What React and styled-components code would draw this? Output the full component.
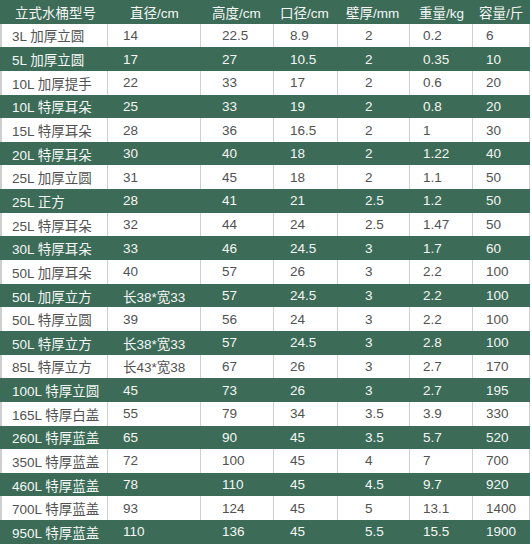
import React from 'react';
import styled, { createGlobalStyle } from 'styled-components';

const GlobalStyle = createGlobalStyle`
  html, body {
    margin: 0;
    padding: 0;
    background: #fff;
  }
  body {
    font-family: "Liberation Sans", "Noto Sans CJK SC", sans-serif;
  }
`;

// column widths and text offsets measured off the picture
const COLS = '107px 93px 73px 64px 72px 63px 58px';
const HEAD_PAD = [15, 23, 12, 7, 9, 10, 7];
const CELL_PAD = [12, 16, 22, 17, 28, 14, 14];

const headers = ['立式水桶型号', '直径/cm', '高度/cm', '口径/cm', '壁厚/mm', '重量/kg', '容量/斤'];

const rows = [
  ['3L 加厚立圆', '14', '22.5', '8.9', '2', '0.2', '6'],
  ['5L 加厚立圆', '17', '27', '10.5', '2', '0.35', '10'],
  ['10L 加厚提手', '22', '33', '17', '2', '0.6', '20'],
  ['10L 特厚耳朵', '25', '33', '19', '2', '0.8', '20'],
  ['15L 特厚耳朵', '28', '36', '16.5', '2', '1', '30'],
  ['20L 特厚耳朵', '30', '40', '18', '2', '1.22', '40'],
  ['25L 加厚立圆', '31', '45', '18', '2', '1.1', '50'],
  ['25L 正方', '28', '41', '21', '2.5', '1.2', '50'],
  ['25L 特厚耳朵', '32', '44', '24', '2.5', '1.47', '50'],
  ['30L 特厚耳朵', '33', '46', '24.5', '3', '1.7', '60'],
  ['50L 加厚耳朵', '40', '57', '26', '3', '2.2', '100'],
  ['50L 加厚立方', '长38*宽33', '57', '24.5', '3', '2.2', '100'],
  ['50L 特厚立圆', '39', '56', '24', '3', '2.2', '100'],
  ['50L 特厚立方', '长38*宽33', '57', '24.5', '3', '2.8', '100'],
  ['85L 特厚立方', '长43*宽38', '67', '26', '3', '2.7', '170'],
  ['100L 特厚立圆', '45', '73', '26', '3', '2.7', '195'],
  ['165L 特厚白盖', '55', '79', '34', '3.5', '3.9', '330'],
  ['260L 特厚蓝盖', '65', '90', '45', '3.5', '5.7', '520'],
  ['350L 特厚蓝盖', '72', '100', '45', '4', '7', '700'],
  ['460L 特厚蓝盖', '78', '110', '45', '4.5', '9.7', '920'],
  ['700L 特厚蓝盖', '93', '124', '45', '5', '13.1', '1400'],
  ['950L 特厚蓝盖', '110', '136', '45', '5.5', '15.5', '1900'],
];

const Table = styled.div`
  width: 530px;
  display: flex;
  flex-direction: column;
`;

const Row = styled.div`
  display: grid;
  grid-template-columns: ${COLS};
  height: 23.65px;
  background: ${p => (p.$green ? '#3c6b58' : '#ffffff')};
  color: ${p => (p.$green ? '#f4f7f5' : '#525252')};
`;

const Cell = styled.div`
  display: flex;
  align-items: center;
  padding-left: ${p => p.$pad}px;
  font-size: 13.5px;
  white-space: nowrap;
  overflow: hidden;
  border-left: 1px solid ${p => (p.$green ? 'transparent' : '#cfcfcf')};
  &:last-child {
    border-right: 1px solid ${p => (p.$green ? 'transparent' : '#cfcfcf')};
  }
  &:first-child {
    border-left-width: 2px;
  }
`;

const App = () => (
  <>
    <GlobalStyle />
    <Table>
      <Row $green>
        {headers.map((h, i) => (
          <Cell key={h} $green $pad={HEAD_PAD[i] - (i === 0 ? 2 : 1)}>
            {h}
          </Cell>
        ))}
      </Row>
      {rows.map((r, ri) => {
        const green = ri % 2 === 1;
        return (
          <Row key={ri} $green={green}>
            {r.map((v, ci) => (
              <Cell key={ci} $green={green} $pad={CELL_PAD[ci] - (ci === 0 ? 2 : 1)}>
                {v}
              </Cell>
            ))}
          </Row>
        );
      })}
    </Table>
  </>
);

export default App;
